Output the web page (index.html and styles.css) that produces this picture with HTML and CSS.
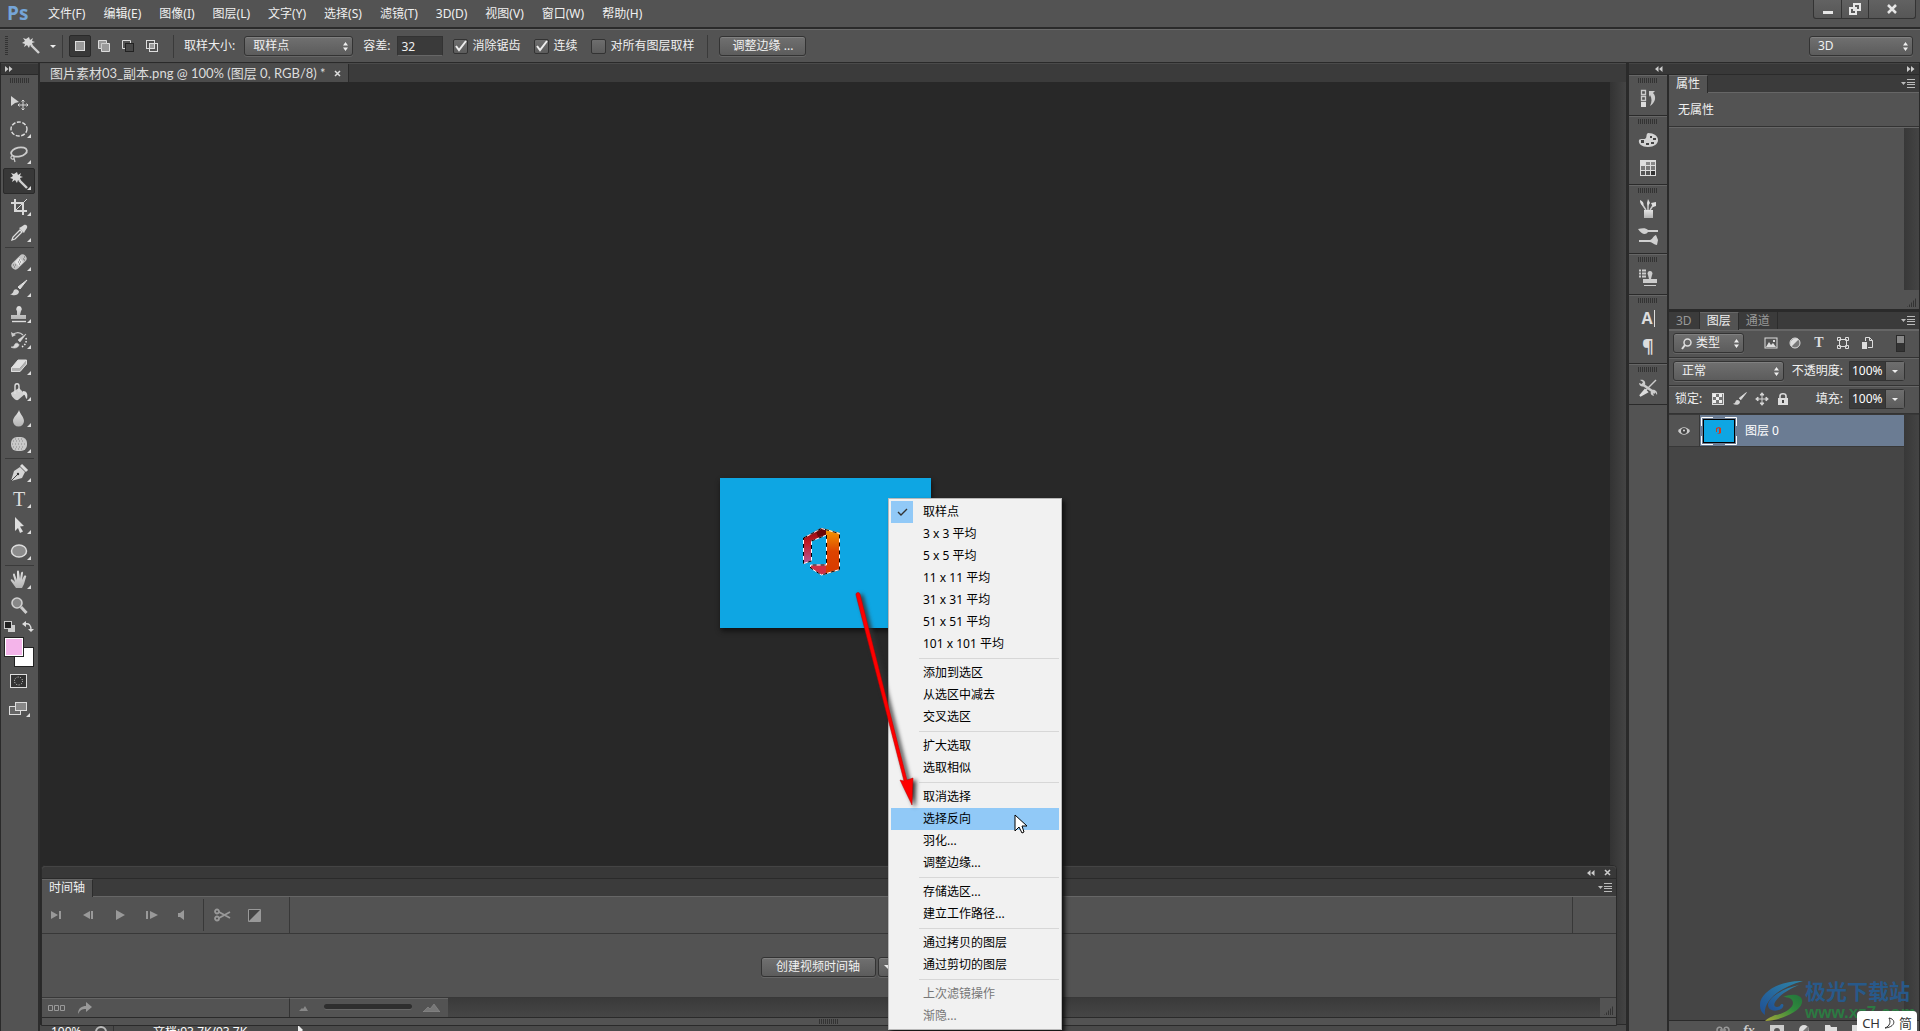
FILE: index.html
```html
<!DOCTYPE html>
<html lang="zh-CN">
<head>
<meta charset="utf-8">
<title>图片素材03_副本.png</title>
<link rel="stylesheet" href="styles.css">
</head>
<body>
<svg class="defs" aria-hidden="true">
  <defs>
    <linearGradient id="metal" x1="0" y1="0" x2="0" y2="1"><stop offset="0" stop-color="#e4e4e4"/><stop offset="1" stop-color="#b4b4b4"/></linearGradient>
    <symbol id="i-wand" viewBox="0 0 20 20"><path d="M8 1l1 3 3-2-1 3 3 1-3 1 1 3-3-1-1 3-2-3-3 2 1-3-3-1 3-2-2-3 3 1z" fill="#d8d8d8"/><path d="M10 9l8 8" stroke="#d0d0d0" stroke-width="2.4"/></symbol>
    <symbol id="i-brush" viewBox="0 0 20 20"><path d="M18 2l-7 9-2-2z" fill="#ddd" stroke="#ddd" stroke-width="1"/><path d="M1 16c3 0 3-2 4-4 2-2 5 0 5 2-1 4-6 4-9 2z" fill="#d4d4d4"/></symbol>
    <symbol id="i-stamp" viewBox="0 0 20 20"><path d="M10 2a3 3 0 0 1 2 5l-1 4h6v4H2v-4h6L8 7a3 3 0 0 1 2-5z" fill="url(#metal)"/><path d="M3 17.5h14" stroke="#ddd" stroke-width="1.4"/></symbol>
    <symbol id="i-menu" viewBox="0 0 14 9"><path d="M0 3h5L2.500 6z" fill="#bbb"/><path d="M6 .5h8M6 3.500h8M6 5.500h8M6 8.500h8" stroke="#bbb"/></symbol>
    <symbol id="i-left" viewBox="0 0 8 6"><path d="M3.500 0v6L0 3zM7.500 0v6L4 3z" fill="#ccc"/></symbol>
    <symbol id="i-right" viewBox="0 0 8 6"><path d="M0 0v6l3.500-3zM4 0v6l3.500-3z" fill="#ccc"/></symbol>
    <symbol id="i-down" viewBox="0 0 6 3"><path d="M0 0h6L3 3z" fill="#eee"/></symbol>
    <symbol id="i-move4" viewBox="0 0 14 14"><path d="M7 1v12M1 7h12M7 .7L5 3h4zM7 13.300L5 11h4zM.7 7L3 5v4zM13.300 7L11 5v4z" stroke="#d4d4d4" fill="#d4d4d4"/></symbol>
  </defs>
</svg>

<div class="app">
  <header class="menubar">
    <span class="logo">Ps</span>
    <nav class="menus">
      <a href="#">文件(F)</a><a href="#">编辑(E)</a><a href="#">图像(I)</a><a href="#">图层(L)</a><a href="#">文字(Y)</a><a href="#">选择(S)</a><a href="#">滤镜(T)</a><a href="#">3D(D)</a><a href="#">视图(V)</a><a href="#">窗口(W)</a><a href="#">帮助(H)</a>
    </nav>
    <div class="winbtns">
      <button aria-label="最小化"><svg width="12" height="12"><path d="M1 9.500h10" stroke="#e6e6e6" stroke-width="3"/></svg></button>
      <button aria-label="还原"><svg width="12" height="12"><path d="M5 1h6v6H5zM1 5h6v6H1z" fill="none" stroke="#e6e6e6" stroke-width="2"/></svg></button>
      <button class="close" aria-label="关闭"><svg width="12" height="12"><path d="M2 2l8 8M10 2l-8 8" stroke="#e6e6e6" stroke-width="2.500"/></svg></button>
    </div>
  </header>

  <div class="options">
    <i class="vgrip"></i>
    <button class="icon wandbtn" aria-label="魔棒工具"><svg width="20" height="20"><use href="#i-wand"/></svg><svg width="6" height="3"><use href="#i-down"/></svg></button>
    <i class="vsep"></i>
    <div class="modes">
      <button class="on" aria-label="新选区"><svg width="14" height="14"><rect x="2.500" y="2.500" width="9" height="9" fill="#999" stroke="#ddd"/></svg></button>
      <button aria-label="添加"><svg width="14" height="14"><path d="M1.500 1.500h8v3h3v8h-8v-3h-3z" fill="#999" stroke="#ddd"/><path d="M4.500 9.500v-5h5" fill="none" stroke="#ccc"/></svg></button>
      <button aria-label="减去"><svg width="14" height="14"><path d="M4.500 9.500h-3v-8h8v3" fill="none" stroke="#ddd"/><rect x="4.500" y="4.500" width="8" height="8" fill="#484848" stroke="#222"/></svg></button>
      <button aria-label="交叉"><svg width="14" height="14"><rect x="1.500" y="1.500" width="8" height="8" fill="none" stroke="#ddd"/><rect x="4.500" y="4.500" width="8" height="8" fill="none" stroke="#ddd"/><path d="M5 5h4v4H5z" fill="#999"/></svg></button>
    </div>
    <i class="vsep"></i>
    <label for="sample">取样大小:</label>
    <select id="sample" class="dd sample"><option>取样点</option></select>
    <label for="tol">容差:</label>
    <input id="tol" class="num" type="text" value="32">
    <label class="chk"><input type="checkbox" checked>消除锯齿</label>
    <label class="chk"><input type="checkbox" checked>连续</label>
    <label class="chk"><input type="checkbox">对所有图层取样</label>
    <i class="vsep"></i>
    <button class="btn refine">调整边缘 ...</button>
    <select class="dd workspace" aria-label="工作区"><option>3D</option></select>
  </div>

  <main class="work">
    <aside class="tools">
      <div class="strip"><svg width="8" height="6"><use href="#i-right"/></svg></div>
      <i class="hgrip"></i>
      <div class="toolset">
        <button class="solo" aria-label="移动"><svg width="20" height="20"><path d="M2 3l8 6-4 1-4 3z" fill="#d4d4d4"/><path d="M14 7v10M9 12h10M12.500 8.500L14 7l1.500 1.500M12.500 15.500L14 17l1.500-1.500M10.500 10.500L9 12l1.500 1.500M17.500 10.500L19 12l-1.500 1.500" stroke="#d4d4d4" fill="none"/></svg></button>
        <button aria-label="椭圆选框"><svg width="20" height="20"><ellipse cx="10" cy="10" rx="8" ry="7" fill="none" stroke="#ddd" stroke-width="1.400" stroke-dasharray="4 1.500"/></svg></button>
        <button aria-label="套索"><svg width="20" height="20"><ellipse cx="10" cy="7" rx="8" ry="4.500" transform="rotate(-12 10 7)" fill="none" stroke="#ccc" stroke-width="1.800"/><path d="M5 11c-3-1-4 2-2 3s3-2 1-3M5 13l1 4" fill="none" stroke="#ccc" stroke-width="1.200"/></svg></button>
        <button class="on" aria-label="魔棒"><svg width="20" height="20"><use href="#i-wand"/></svg></button>
        <button aria-label="裁剪"><svg width="20" height="20"><path d="M6 2v12h12M2 6h12v12" fill="none" stroke="#d8d8d8" stroke-width="2"/><path d="M7 13L18 2" stroke="#d8d8d8"/></svg></button>
        <button aria-label="吸管"><svg width="20" height="20"><path d="M3 17l1-3 7-7 2 2-7 7z" fill="#555" stroke="#ddd" stroke-width="1.300"/><path d="M10 5l5 5 1-2 2-3c1-2-1-4-3-3l-3 2z" fill="#d8d8d8"/></svg></button>
        <i class="hsep"></i>
        <button aria-label="修复画笔"><svg width="20" height="20"><rect x="1" y="6" width="18" height="8" rx="4" transform="rotate(-45 10 10)" fill="#c4c4c4"/><rect x="7" y="7" width="6" height="6" transform="rotate(-45 10 10)" fill="#e6e6e6"/><path d="M9 10h1M11 10h1M10 8h1M10 12h1M5 15h1M15 5h1M14 7h1M6 13h1M4 13h1M15 8h1" stroke="#666"/></svg></button>
        <button aria-label="画笔"><svg width="20" height="20"><use href="#i-brush"/></svg></button>
        <button aria-label="仿制图章"><svg width="20" height="20"><use href="#i-stamp"/></svg></button>
        <button aria-label="历史记录画笔"><svg width="20" height="20"><path d="M17 4l-6 8-2-2zM2 17c3 0 3-1 4-3 2-2 4 0 4 1-1 3-5 4-8 2z" fill="#d8d8d8" stroke="#d8d8d8" stroke-width=".6"/><path d="M3 5c4-3 8-3 11 0" fill="none" stroke="#ccc" stroke-width="1.300"/><path d="M2 2l1 5 4-2z" fill="#ccc"/><path d="M17 8c1 4-1 8-5 9" fill="none" stroke="#eee" stroke-width="1.500" stroke-dasharray="1.500 1.500"/></svg></button>
        <button aria-label="橡皮擦"><svg width="20" height="20"><path d="M9 4h9l-7 8H2z" fill="#e2e2e2"/><path d="M2 12h9v4H2zM11 12l7-8v4l-7 8z" fill="#b2b2b2"/><path d="M2.500 12v3.500h8.500l6.500-7.500V4H9z" fill="none" stroke="#ddd"/></svg></button>
        <button aria-label="油漆桶"><svg width="20" height="20"><path d="M2 11l8-5 6 6-7 6c-3 1-7-4-7-7z" fill="#d2d2d2"/><path d="M6 12V4c0-3 4-3 4 0v6" fill="none" stroke="#ddd" stroke-width="1.400"/><path d="M14 9c4 0 5 3 4 8-2-1-1-4-4-5z" fill="#ddd"/></svg></button>
        <button aria-label="模糊"><svg width="20" height="20"><path d="M10 2c1 4 5 7 5 11a5 5 0 0 1-11 0c0-4 5-7 6-11z" fill="url(#metal)"/></svg></button>
        <button aria-label="海绵"><svg width="20" height="20"><rect x="2" y="3" width="16" height="14" rx="6" fill="#c8c8c8"/><path d="M4 7h12M3 10h14M4 13h12M6 5h9M6 15h9" stroke="#888" stroke-dasharray="1 2"/></svg></button>
        <i class="hsep"></i>
        <button aria-label="钢笔"><svg width="20" height="20"><path d="M2 18l3-10 6-4 5 5-3 6z" fill="#d4d4d4"/><path d="M2 18l7-7" stroke="#444"/><circle cx="9" cy="11" r="1.200" fill="#333"/><path d="M12 2l6 6" stroke="#ddd" stroke-width="3"/></svg></button>
        <button class="type" aria-label="文字">T</button>
        <button aria-label="路径选择"><svg width="20" height="20"><path d="M6 2l9 9-4 .500 3 5-3 1.500-2-5-3 3z" fill="#ddd"/></svg></button>
        <button aria-label="椭圆"><svg width="20" height="20"><ellipse cx="10" cy="10" rx="7.500" ry="6" fill="#8c8c8c" stroke="#ddd" stroke-width="1.500"/></svg></button>
        <i class="hsep"></i>
        <button aria-label="抓手"><svg width="20" height="20"><path d="M7 18l-5-7c-1-2 1-2 2-1l2 2-2-7c0-2 2-2 2 0l2 5V2c0-2 2-2 2 0l1 7 1-6c1-2 2-1 2 0l-1 7 2-4c1-1 3 0 2 1l-2 7-2 4z" fill="url(#metal)"/></svg></button>
        <button class="solo" aria-label="缩放"><svg width="20" height="20"><circle cx="8" cy="7" r="5" fill="#888" stroke="#d0d0d0" stroke-width="1.600"/><path d="M12 11l5.500 6" stroke="#ccc" stroke-width="3"/></svg></button>
      </div>
      <svg class="mini" width="32" height="12"><rect x="4" y="4" width="7" height="7" fill="#ccc"/><rect x=".5" y=".5" width="7" height="7" fill="#222" stroke="#ccc"/><path d="M21 3c4-1 6 1 6 6" fill="none" stroke="#ddd" stroke-width="1.300"/><path d="M22 0v6l-4-3zM24 8h6l-3 3z" fill="#ddd"/></svg>
      <div class="swatches"><span class="bgc"></span><span class="fgc"></span></div>
      <div class="toolset modeset">
        <button class="solo" aria-label="快速蒙版"><svg width="20" height="20"><rect x="2.500" y="3.500" width="16" height="13" fill="#333" stroke="#ddd"/><circle cx="10.500" cy="10" r="4" fill="none" stroke="#ddd" stroke-dasharray="1 1.500"/></svg></button>
        <button aria-label="屏幕模式"><svg width="20" height="20"><rect x="1.500" y="8.500" width="11" height="8" fill="#666" stroke="#ddd"/><rect x="7.500" y="4.500" width="11" height="8" fill="#888" stroke="#ddd"/></svg></button>
      </div>
    </aside>

    <section class="doc">
      <div class="tabs doctabs"><div class="doctab">图片素材03_副本.png @ 100% (图层 0, RGB/8) * <button class="icon" aria-label="关闭文档"><svg width="7" height="7"><path d="M1 1l5 5M6 1L1 6" stroke="#ddd" stroke-width="1.500"/></svg></button></div></div>
      <div class="stage">
        <div class="canvas">
          <svg class="picture" width="211" height="150" viewBox="0 0 211 150">
            <defs>
              <linearGradient id="l1" x1="0" y1="0" x2="0" y2="1"><stop offset="0" stop-color="#8a0808"/><stop offset=".4" stop-color="#c01a24"/><stop offset="1" stop-color="#b85a9c"/></linearGradient>
              <linearGradient id="l2" x1="0" y1="0" x2="0" y2="1"><stop offset="0" stop-color="#f59a00"/><stop offset=".5" stop-color="#dd4400"/><stop offset="1" stop-color="#d83a00"/></linearGradient>
            </defs>
            <rect width="211" height="150" fill="#0ea6e3"/>
            <path d="M83 60l18-10 6 2v5l-16 6v20l-7 3z" fill="url(#l1)"/>
            <path d="M96 53l5-3 5 1v6l-8 2z" fill="#6b0606"/>
            <path d="M90 87l17-1v10l-5 1-12-7z" fill="#cf2f45"/>
            <path d="M106 51l14 4v37l-14 4z" fill="url(#l2)"/>
            <g fill="none" stroke="#fff"><path d="M83.500 60l18-9.500 18 5v36l-18 5.500-11-7v-3h16V57l-15 6v20l-8 2.500z"/><path d="M83.500 60l18-9.500 18 5v36l-18 5.500-11-7v-3h16V57l-15 6v20l-8 2.500z" stroke="#000" stroke-dasharray="4 4"/></g>
          </svg>
        </div>
        <div class="vscroll"></div>
      </div>
      <div class="status"><span class="zoomv">100%</span><svg width="14" height="14"><circle cx="7" cy="7" r="5" fill="none" stroke="#bbb" stroke-width="2"/></svg><span class="docsize">文档:93.7K/93.7K</span><svg width="8" height="10"><path d="M1 0v10l5-5z" fill="#eee"/></svg></div>

      <section class="timeline">
        <div class="strip tstrip"><svg width="8" height="6"><use href="#i-left"/></svg><svg width="7" height="7"><path d="M1 1l5 5M6 1L1 6" stroke="#ccc" stroke-width="1.600"/></svg></div>
        <div class="tabs"><div class="tab on">时间轴</div><svg class="pmenu" width="14" height="9"><use href="#i-menu"/></svg></div>
        <div class="tctl">
          <div class="play">
            <button aria-label="首帧"><svg width="12" height="10"><path d="M1 1v8l7-4zM9 1h2v8H9z"/></svg></button>
            <button aria-label="上一帧"><svg width="12" height="10"><path d="M8 1v8L1 5zM9 1h2v8H9z"/></svg></button>
            <button aria-label="播放"><svg width="12" height="10"><path d="M2 0v10l9-5z"/></svg></button>
            <button aria-label="下一帧"><svg width="12" height="10"><path d="M0 1h2v8H0zM4 1v8l8-4z"/></svg></button>
            <button aria-label="静音"><svg width="12" height="10"><path d="M0 3h2l4-3v10L2 7H0z"/></svg></button>
          </div>
          <div class="cut">
            <button aria-label="拆分"><svg width="17" height="14"><g fill="none" stroke="#999" stroke-width="1.800"><circle cx="3" cy="3.500" r="2"/><circle cx="3" cy="10.500" r="2"/><path d="M5 4l11 6M5 10l11-6"/></g></svg></button>
            <button aria-label="过渡"><svg width="13" height="13"><path d="M.500 .500h12v12H.500z" fill="#444" stroke="#999"/><path d="M1 12L12 1v11z"/></svg></button>
          </div>
          <div class="ruler"></div>
        </div>
        <div class="tbody"><button class="btn">创建视频时间轴</button><button class="btn drop" aria-label="更多"><svg width="10" height="5" viewBox="0 0 6 3"><use href="#i-down"/></svg></button></div>
        <div class="tfoot">
          <div class="tf1"><svg width="18" height="8"><path d="M.5 1.500h4v5h-4zM6.500 1.500h4v5h-4zM12.500 1.500h4v5h-4z" fill="none" stroke="#999"/></svg><svg width="14" height="12"><path d="M0 12c0-6 4-8 8-8V0l6 5-6 5V7C4 7 2 8 0 12z" fill="#999"/></svg></div>
          <div class="tf2"><svg width="9" height="5"><path d="M0 5l3-3 1 1 2-3 3 5z" fill="#888"/></svg><i class="track"></i><svg width="17" height="8"><path d="M0 8l5-5 2 2 4-5 6 8z" fill="#777" stroke="#999" stroke-width=".5"/></svg></div>
          <div class="tf3"></div>
          <i class="corner"></i>
        </div>
        <div class="tend"><i class="hgrip"></i></div>
      </section>
    </section>

    <aside class="right">
      <div class="strip rstrip"><svg width="8" height="6"><use href="#i-left"/></svg><svg width="8" height="6"><use href="#i-right"/></svg></div>
      <div class="cols">
        <div class="dock">
          <div class="dgroup"><i class="hgrip"></i>
            <button aria-label="历史记录"><svg width="20" height="20"><path d="M3.500 1.500h4v4h-4zM3.500 7.500h4v4h-4z" fill="none" stroke="#ccc" stroke-width="1.300"/><path d="M3 13h5v5H3z" fill="#ddd"/><path d="M11 2h6l-2 2c4 4 2 10-3 13 2-4 2-8 0-11l-1 2z" fill="#ccc"/></svg></button></div>
          <div class="dgroup"><i class="hgrip"></i>
            <button aria-label="颜色"><svg width="20" height="20"><path d="M10 3c6 0 10 3 10 7s-4 7-10 7S0 14 1 10c1-2 6 0 7-2s0-4 2-5z" fill="#d4d4d4"/><path d="M3 10h3v3H3zM8 13h3v2H8zM13 12h3v2h-3zM15 8h3v2h-3zM12 6h2v2h-2z" fill="#444"/></svg></button>
            <button aria-label="色板"><svg width="20" height="20"><path d="M2 2h16v16H2z" fill="#ddd"/><path d="M8 4h4v3H8zM13 4h4v3h-4z" fill="#888"/><path d="M3 8h4v4H3zM8 8h4v4H8zM13 8h4v4h-4z" fill="#777"/><path d="M3 13h4v4H3zM8 13h4v4H8z" fill="#555"/><path d="M13 13h4v4h-4z" fill="#333"/></svg></button></div>
          <div class="dgroup"><i class="hgrip"></i>
            <button aria-label="画笔"><svg width="20" height="20"><path d="M6 11h9v8H6z" fill="url(#metal)"/><path d="M8 11L4 5M10 11V4M12 11l4-6" stroke="#ccc" stroke-width="1.500"/><path d="M2 1c4 2 4 4 3 6C2 5 2 3 2 1zM10 0l2 4-2 3-1-3zM13 4l5-1v4l-3 1z" fill="#ddd"/></svg></button>
            <button aria-label="画笔预设"><svg width="20" height="20"><path d="M0 2c5-1 8-1 10 1h10v2H10c-2 3-6 3-10-3zM1 13h11c2 0 3-4 6-5l2 5-1 5c-3 0-5-3-7-3H1z" fill="#d0d0d0"/></svg></button></div>
          <div class="dgroup"><i class="hgrip"></i>
            <button aria-label="仿制源"><svg width="20" height="20"><path d="M1 2.500h2M4 2.500h4M1 5.500h2M4 5.500h4M1 8.500h2M4 8.500h4" stroke="#ccc" stroke-width="2"/><path d="M12 3a2.500 2.500 0 0 1 2 4l-1 4h6v4H5v-4h6l-1-4a2.500 2.500 0 0 1 2-4zM6 17h12v1H6z" fill="#ccc"/></svg></button></div>
          <div class="dgroup"><i class="hgrip"></i>
            <button class="char" aria-label="字符">A<i class="caret"></i></button>
            <button class="char para" aria-label="段落">¶</button></div>
          <div class="dgroup"><i class="hgrip"></i>
            <button aria-label="工具预设"><svg width="20" height="20"><path d="M5 15L18 2" stroke="#ccc" stroke-width="1.500"/><path d="M2 18l5-6 2 2z" fill="#ddd" stroke="#ddd" stroke-width="2"/><path d="M4 6l13 9" stroke="#ccc" stroke-width="2.500"/><path d="M1 5l3 1 1-2-3-2c4-1 6 2 5 5-2 3-6 1-6-2zM19 17l-2-3-2 1 1 3c-4-1-4-4-2-6 3-1 6 2 5 5z" fill="#ccc"/></svg></button></div>
        </div>

        <div class="panels">
          <section class="props">
            <div class="tabs"><div class="tab on">属性</div><svg class="pmenu" width="14" height="9"><use href="#i-menu"/></svg></div>
            <p class="noprops">无属性</p>
            <div class="propbody"><i class="pscroll"></i></div>
            <div class="propfoot"><i class="corner"></i></div>
          </section>
          <section class="layers">
            <div class="tabs"><div class="tab">3D</div><div class="tab on">图层</div><div class="tab">通道</div><svg class="pmenu" width="14" height="9"><use href="#i-menu"/></svg></div>
            <div class="lrow">
              <span class="kindwrap"><svg width="11" height="12"><circle cx="6.500" cy="4.500" r="3.500" fill="none" stroke="#ddd" stroke-width="1.500"/><path d="M4 7l-3 4" stroke="#ddd" stroke-width="2"/></svg><select class="dd kind" aria-label="筛选类型"><option>类型</option></select></span>
              <div class="filters">
                <svg width="14" height="14"><rect x="1" y="2" width="12" height="10" fill="none" stroke="#ddd"/><path d="M2 11l3-5 2 3 2-2 3 4zM9 4h2v2H9z" fill="#ddd"/></svg>
                <svg width="14" height="14"><circle cx="7" cy="7" r="5" fill="#777" stroke="#ddd"/><path d="M3.500 10.500l7-7A5 5 0 0 0 3.500 10.500z" fill="#ddd"/></svg>
                <span class="ft">T</span>
                <svg width="14" height="14"><path d="M3.500 3.500h7v7h-7zM1.500 1.500h3v3h-3zM9.500 1.500h3v3h-3zM1.500 9.500h3v3h-3zM9.500 9.500h3v3h-3z" fill="#535353" stroke="#ddd"/></svg>
                <svg width="14" height="14"><path d="M5.500 5V1.500h4l3 3v7H8M9.500 1.500v3h3" fill="none" stroke="#ddd"/><path d="M2 6h5v7H2z" fill="#ddd"/></svg>
              </div>
              <i class="switch"></i>
            </div>
            <div class="lrow">
              <select class="dd blend" aria-label="混合模式"><option>正常</option></select>
              <label class="pct">不透明度: <span><input type="text" value="100%"><button aria-label="不透明度滑块"><svg width="6" height="3"><use href="#i-down"/></svg></button></span></label>
            </div>
            <div class="lrow">
              <span class="locklbl">锁定:</span>
              <div class="locks">
                <svg width="14" height="14"><rect x="1.500" y="1.500" width="11" height="11" fill="#777" stroke="#ddd"/><path d="M2 2h3v3H2zM8 2h3v3H8zM5 5h3v3H5zM2 8h3v3H2zM8 8h3v3H8z" fill="#eee"/></svg>
                <svg width="16" height="16"><use href="#i-brush"/></svg>
                <svg width="14" height="14"><use href="#i-move4"/></svg>
                <svg width="14" height="14"><path d="M2 6h10v7H2z" fill="#ddd"/><path d="M4 6V4c0-3 6-3 6 0v2" fill="none" stroke="#ddd" stroke-width="1.600"/><path d="M7 8v3" stroke="#444" stroke-width="2"/></svg>
              </div>
              <label class="pct">填充: <span><input type="text" value="100%"><button aria-label="填充滑块"><svg width="6" height="3"><use href="#i-down"/></svg></button></span></label>
            </div>
            <div class="llist">
              <div class="items">
                <div class="layer">
                  <div class="eye"><svg width="12" height="10"><path d="M0 5c3-5 9-5 12 0-3 5-9 5-12 0z" fill="#ccc"/><circle cx="6" cy="5" r="3" fill="#444"/><circle cx="6" cy="4.500" r="1" fill="#ddd"/></svg></div>
                  <div class="lname"><svg width="36" height="28"><path d="M.5 9V.500H12M24 .500h11.500V9M35.500 19v8.500H24M12 27.500H.500V19" fill="none" stroke="#fff"/><rect x="2.500" y="2.500" width="31" height="23" fill="#0ea6e3" stroke="#000"/><path d="M15 11l3-1v1l-2 1v3h-1zM16 16h2v1zM18 10l2 1v5l-2 1z" fill="#d03a20"/></svg>图层 0</div>
                </div>
              </div>
              <i class="pscroll"></i>
            </div>
            <div class="lfoot">
              <svg width="14" height="12"><path d="M6 5c-1-3-5-2-5 1s4 4 5 1M8 5c1-3 5-2 5 1s-4 4-5 1M4 6h6" fill="none" stroke="#999" stroke-width="1.500"/></svg>
              <span class="fx">fx</span>
              <svg width="14" height="12"><path d="M0 1h14v11H0z" fill="#ccc"/><circle cx="7" cy="7" r="3" fill="#555"/></svg>
              <svg width="14" height="12"><circle cx="7" cy="6" r="5" fill="#ddd"/><path d="M3 10l8-8c2 4 0 9-5 9z" fill="#777"/></svg>
              <svg width="14" height="12"><path d="M1 1h5l1 2h6v9H1z" fill="#ddd"/></svg>
              <svg width="14" height="12"><path d="M1 1h12v11H1z" fill="#ddd"/></svg>
            </div>
          </section>
        </div>
      </div>
    </aside>
  </main>
</div>

<div class="brand">
  <svg width="46" height="42" viewBox="0 0 46 42">
    <defs><linearGradient id="b1" x1="0" y1="1" x2="1" y2="0"><stop offset="0" stop-color="#1f4f94"/><stop offset="1" stop-color="#2f86a8"/></linearGradient><linearGradient id="b2" x1="0" y1="1" x2="1" y2="0"><stop offset="0" stop-color="#a8a838"/><stop offset=".6" stop-color="#2f8a3c"/><stop offset="1" stop-color="#23733c"/></linearGradient></defs>
    <path d="M44 1C22 0 0 12 1 26c0 4 2 7 5 9C4 22 18 8 44 1z" fill="url(#b1)"/>
    <path d="M40 5C24 8 9 18 9 25c0 6 8 7 13 4 3-2 3-5 1-5-2 0-1 3-5 3-8-1 2-14 22-22z" fill="url(#b1)"/>
    <path d="M24 17c10-4 18-2 19 3 2 9-17 20-37 21 4-4 7-4 10-6 9-1 18-7 18-12 0-4-4-6-10-6z" fill="url(#b2)"/>
  </svg>
  <div class="btext"><span class="bname">极光下载站</span><span class="burl">www.xz7.com</span></div>
</div>
<div class="ime">CH <svg width="11" height="12"><path d="M5 1c7 1 7 9-4 10 5-2 6-6 4-10z" fill="none" stroke="#333"/></svg> 简</div>

<ul class="ctx">
  <li class="checked"><svg width="22" height="22"><path d="M7 11l3 3 6-6" fill="none" stroke="#333" stroke-width="1.400"/></svg>取样点</li>
  <li>3 x 3 平均</li><li>5 x 5 平均</li><li>11 x 11 平均</li><li>31 x 31 平均</li><li>51 x 51 平均</li><li>101 x 101 平均</li>
  <li class="line"></li>
  <li>添加到选区</li><li>从选区中减去</li><li>交叉选区</li>
  <li class="line"></li>
  <li>扩大选取</li><li>选取相似</li>
  <li class="line"></li>
  <li>取消选择</li><li class="hover">选择反向</li><li>羽化...</li><li>调整边缘...</li>
  <li class="line"></li>
  <li>存储选区...</li><li>建立工作路径...</li>
  <li class="line"></li>
  <li>通过拷贝的图层</li><li>通过剪切的图层</li>
  <li class="line"></li>
  <li class="off">上次滤镜操作</li><li class="off">渐隐...</li>
</ul>
<svg class="arrow" width="76" height="224"><path d="M6 5l48 186-4-1 12 25 1-27-6 2L10 4a2 2 0 0 0-4 1z" fill="#fe0000" stroke="#b00" stroke-width=".5"/></svg>
<svg class="cursor" width="14" height="20"><path d="M1 1v16l4-4 3 6 2-1-2-6h5z" fill="#fff" stroke="#000"/></svg>
</body>
</html>
```
FILE: styles.css
```css
* { box-sizing: border-box; }
body {
  margin: 0;
  height: 100vh;
  overflow: hidden;
  position: relative;
  background: #282828;
  color: #f0f0f0;
  font: 12px/16px "Noto Sans", "Noto Sans CJK SC", sans-serif;
}
button, input, select { font: inherit; color: inherit; margin: 0; padding: 0; border: 0; background: none; border-radius: 0; }
svg { display: block; flex: none; }
i { display: block; flex: none; }
.defs { position: absolute; width: 0; height: 0; }

/* the lower status rows run past the window edge */
.app { display: flex; flex-direction: column; height: calc(100vh + 14px); }

/* menu bar */
.menubar { display: flex; flex: none; height: 29px; background: #535353; border-bottom: 2px solid #2a2a2a; padding: 0 4px 0 7px; }
.logo { width: 41px; color: #75a5d8; font: bold 19px/27px "Open Sans", sans-serif; }
.menus { display: flex; gap: 18px; line-height: 27px; }
.menus a { color: #f0f0f0; text-decoration: none; }
.winbtns { display: flex; margin-left: auto; height: 19px; border: 1px solid #333; border-top: 0; border-radius: 0 0 3px 3px; background: linear-gradient(#626262, #565656); }
.winbtns button { width: 27px; display: flex; justify-content: center; padding-top: 3px; }
.winbtns button + button { border-left: 1px solid #333; }
.winbtns .close { width: 47px; }

/* options bar */
.options { display: flex; flex: none; align-items: center; height: 34px; padding: 0 7px 0 5px; background: #535353; border-top: 1px solid #6a6a6a; border-bottom: 1px solid #2a2a2a; }
.vgrip { width: 3px; height: 20px; background: repeating-linear-gradient(#333 0 1px, #535353 1px 2px); margin-right: 13px; }
.icon { display: flex; align-items: center; }
.wandbtn { gap: 9px; margin-right: 6px; }
.vsep { width: 1px; height: 23px; background: #3a3a3a; }
.modes { display: flex; gap: 2px; margin: 0 10px 0 6px; }
.modes button { width: 22px; height: 22px; display: flex; align-items: center; justify-content: center; border-radius: 2px; }
.modes .on { background: #383838; border: 1px solid #2a2a2a; }
.options > label { margin-left: 10px; }
.btn, .dd { height: 20px; border: 1px solid #333; border-radius: 3px; background: linear-gradient(#707070, #5c5c5c); box-shadow: 0 1px #666, inset 0 1px #808080; text-align: center; }
.dd {
  appearance: none;
  padding: 0 18px 0 8px;
  text-align: left;
  background: url("data:image/svg+xml,%3Csvg xmlns='http://www.w3.org/2000/svg' width='5' height='9'%3E%3Cpath d='M0 3.500h5L2.500 0zM0 5.500h5L2.500 9z' fill='%23eee'/%3E%3C/svg%3E") no-repeat right 4px center, linear-gradient(#707070, #5c5c5c);
}
.sample { width: 109px; margin-left: 9px; }
.num { width: 46px; height: 20px; margin-left: 7px; padding-left: 3px; background: #3a3a3a; border: 1px solid #333; border-bottom-color: #666; }
.options > .chk { display: flex; align-items: center; gap: 4px; margin-left: 10px; }
.options > .chk + .chk { margin-left: 14px; }
.chk input { appearance: none; width: 15px; height: 15px; border: 1px solid #333; border-radius: 2px; background: linear-gradient(#6e6e6e, #5c5c5c); }
.chk input:checked { background: url("data:image/svg+xml,%3Csvg xmlns='http://www.w3.org/2000/svg' width='13' height='13'%3E%3Cpath d='M2 6l3 4 7-9' fill='none' stroke='%23eee' stroke-width='2'/%3E%3C/svg%3E") center no-repeat, linear-gradient(#6e6e6e, #5c5c5c); }
.chk + .vsep { margin: 0 11px 0 13px; }
.refine { width: 87px; }
.workspace { width: 104px; margin-left: auto; }

/* shared panel parts */
.work { display: flex; flex: 1; min-height: 0; }
.strip { display: flex; flex: none; align-items: center; height: 12px; background: #383838; border-bottom: 1px solid #2a2a2a; border-top: 1px solid #444; }
.hgrip { width: 20px; height: 5px; background: repeating-linear-gradient(90deg, #333 0 1px, #535353 1px 2px); }
.tabs { display: flex; flex: none; align-items: stretch; height: 18px; background: #3b3b3b; border-bottom: 1px solid #666; }
.tab { padding: 0 7px; line-height: 17px; color: #999; border-right: 1px solid #2c2c2c; }
.tab.on { color: #f0f0f0; background: #535353; margin-bottom: -1px; border-top: 1px solid #666; line-height: 16px; }
.pmenu { margin: 4px 4px 0 auto; }
.corner { width: 10px; height: 10px; background: repeating-linear-gradient(90deg, #333 0 1px, transparent 1px 2px); clip-path: polygon(100% 0, 100% 100%, 0 100%); }

/* tool box */
.tools { flex: none; display: flex; flex-direction: column; align-items: flex-start; width: 40px; background: #535353; border-left: 1px solid #2a2a2a; border-right: 2px solid #2c2c2c; }
.tools .strip { width: 100%; padding-left: 4px; }
.tools > .hgrip { margin: 3px 0 7px 9px; }
.toolset { display: flex; flex-direction: column; align-items: center; margin-left: 2px; }
.toolset button { position: relative; width: 32px; height: 26px; display: flex; align-items: center; justify-content: center; border: 1px solid transparent; border-radius: 2px; }
.toolset button.on { background: #383838; border-color: #2a2a2a; }
.toolset button:not(.solo)::after { content: ""; position: absolute; right: 3px; bottom: 3px; border: 2px solid; border-color: transparent #ddd #ddd transparent; }
.toolset .type { font: 20px/24px "Liberation Serif", serif; color: #ddd; }
.hsep { width: 29px; height: 3px; border-bottom: 1px solid #535353; border-top: 1px solid #535353; background: #3a3a3a; }
.mini { margin: 2px 0 4px 3px; }
.swatches { display: grid; grid-template: repeat(3, 10px) / repeat(3, 10px); margin-left: 3px; }
.swatches span { border: 1px solid #222; box-shadow: inset 0 0 0 1px #fff; }
.fgc { grid-area: 1 / 1 / 3 / 3; background: #f4b4ea; }
.bgc { grid-area: 2 / 2 / 4 / 4; background: #fff; }
.modeset { gap: 1px; padding-top: 1px; margin-left: 1px; }

/* document */
.doc { position: relative; flex: 1; min-width: 0; display: flex; flex-direction: column; }
.doctabs { height: 19px; border-bottom: 0; border-top: 1px solid #4a4a4a; }
.doctab { display: flex; align-items: center; gap: 8px; padding: 0 7px 0 10px; font: 13px/17px "Lato", "Noto Sans CJK SC", sans-serif; background: #4c4c4c; color: #ddd; border-right: 1px solid #2a2a2a; }
.stage { flex: 1; display: flex; min-height: 0; }
.canvas { flex: 1; display: flex; align-items: center; justify-content: center; background: #282828; }
.picture { box-shadow: 1px 3px 5px #111; }
.vscroll { width: 16px; background: linear-gradient(90deg, #333, #444); }
.status { flex: none; display: flex; align-items: flex-start; height: 21px; background: #4a4a4a; line-height: 14px; border-top: 1px solid #2a2a2a; color: #fff; }
.zoomv { width: 54px; padding-left: 11px; }
.docsize { width: 184px; margin-left: 5px; padding-left: 39px; border-left: 1px solid #333; }

/* timeline floats over the document */
.timeline { position: absolute; left: 1px; right: 9px; bottom: 19px; height: 161px; display: flex; flex-direction: column; background: #535353; border: 1px solid #2a2a2a; border-radius: 4px 4px 0 0; }
.tstrip { height: 13px; gap: 9px; justify-content: flex-end; padding-right: 5px; border-radius: 4px 4px 0 0; }
.tctl { display: flex; flex: none; height: 37px; border-bottom: 1px solid #383838; }
.tctl button svg { fill: #999; }
.play { display: flex; gap: 20px; padding: 0 13px 0 8px; margin: 2px 0; width: 162px; border-right: 1px solid #383838; }
.play button, .cut button { flex: none; display: flex; align-items: center; }
.cut { display: flex; gap: 17px; padding-left: 10px; width: 86px; border-right: 1px solid #383838; }
.ruler { flex: 1; margin-right: 43px; border-right: 1px solid #383838; }
.tbody { flex: 1; display: flex; justify-content: center; align-items: flex-start; gap: 2px; padding: 23px 0 0 3px; }
.tbody .btn { width: 115px; }
.tbody .drop { width: 23px; display: flex; align-items: center; justify-content: center; }
.tfoot { display: flex; flex: none; height: 20px; border-top: 1px solid #383838; }
.tf1 { display: flex; align-items: center; gap: 12px; width: 248px; padding-left: 6px; border-right: 1px solid #333; border-top: 1px solid #666; }
.tf2 { display: flex; align-items: center; gap: 11px; width: 158px; padding-left: 9px; border-top: 1px solid #666; }
.track { width: 88px; height: 5px; margin: 0 0 3px 5px; border-radius: 3px; background: #2e2e2e; box-shadow: 0 1px #666; }
.tf3 { flex: 1; background: linear-gradient(#3a3a3a, #464646); }
.tfoot .corner { margin: 7px 2px 0 4px; }
.tend { display: flex; flex: none; justify-content: center; align-items: center; height: 8px; border-top: 1px solid #2a2a2a; }

/* right side */
.right { flex: none; display: flex; flex-direction: column; width: 294px; border-left: 3px solid #2a2a2a; border-right: 1px solid #2a2a2a; }
.rstrip { justify-content: space-between; padding: 0 4px 0 26px; }
.cols { display: flex; flex: 1; min-height: 0; }
.dock { flex: none; width: 40px; background: #535353; border-right: 2px solid #2a2a2a; }
.dgroup { display: flex; flex-direction: column; align-items: center; padding: 2px 0 3px; border-top: 1px solid #666; border-bottom: 1px solid #2a2a2a; }
.dgroup .hgrip { margin-bottom: 1px; }
.dgroup button { height: 28px; display: flex; align-items: center; }
.dgroup button svg { margin-top: 1px; }
.dgroup .char { gap: 1px; font: bold 16px/28px "Open Sans", sans-serif; color: #ddd; }
.caret { width: 1px; height: 17px; background: #ddd; }
.dgroup .para { font-size: 18px; }
.panels { flex: 1; min-width: 0; display: flex; flex-direction: column; background: #535353; }
.props { flex: none; border-bottom: 3px solid #2a2a2a; }
.noprops { margin: 0; padding: 9px 9px 8px; border-bottom: 1px solid #333; }
.propbody { display: flex; justify-content: flex-end; height: 163px; border-top: 1px solid #666; }
.pscroll { width: 15px; background: linear-gradient(90deg, #383838, #444); }
.propfoot { display: flex; justify-content: flex-end; align-items: flex-end; height: 19px; padding: 2px; }
.layers { flex: 1; min-height: 0; display: flex; flex-direction: column; }
.lrow { display: flex; flex: none; align-items: center; height: 28px; padding: 0 14px 2px 4px; border-bottom: 1px solid #333; border-top: 1px solid #666; }
.kindwrap { display: grid; }
.kindwrap > * { grid-area: 1 / 1; }
.kindwrap svg { z-index: 1; margin: 5px 0 0 8px; }
.kind { width: 71px; padding-left: 22px; }
.filters { display: flex; align-items: center; gap: 10px; margin-left: 20px; }
.ft { width: 14px; text-align: center; font: bold 14px/14px "Liberation Serif", serif; color: #ddd; }
.switch { width: 9px; height: 17px; margin-left: auto; border: 1px solid #2a2a2a; background: linear-gradient(#888 0 45%, #333 45%); }
.blend { width: 111px; }
.pct { display: flex; align-items: center; gap: 6px; margin-left: auto; }
.pct span { display: flex; height: 20px; border: 1px solid #333; border-radius: 0 3px 3px 0; }
.pct input { width: 35px; padding-left: 2px; background: #3a3a3a; color: #fff; }
.pct button { display: flex; align-items: center; justify-content: center; width: 19px; border-left: 1px solid #333; background: linear-gradient(#6e6e6e, #5c5c5c); }
.locklbl { margin-left: 2px; }
.locks { display: flex; align-items: center; gap: 7px; margin-left: 9px; }
.llist { flex: 1; display: flex; min-height: 0; background: #454545; border-top: 1px solid #383838; }
.items { flex: 1; }
.layer { display: flex; height: 32px; border-bottom: 1px solid #383838; }
.eye { width: 31px; display: flex; align-items: center; justify-content: center; background: #535353; border-right: 1px solid #383838; }
.lname { flex: 1; display: flex; align-items: center; gap: 8px; padding-left: 1px; background: #6b7c93; color: #fff; }
.lfoot { flex: none; display: flex; gap: 13px; height: 25px; padding: 3px 0 0 47px; border-top: 1px solid #2a2a2a; }
.fx { width: 14px; font: italic bold 14px/14px "Liberation Serif", serif; color: #ccc; }

/* overlays */
.brand { position: absolute; right: 9px; bottom: 7px; display: flex; align-items: flex-start; }
.btext { display: flex; flex-direction: column; width: 106px; }
.bname { font-size: 21px; line-height: 22px; font-weight: bold; color: #28598a; white-space: nowrap; }
.burl { font: bold 17px/22px "Liberation Sans", sans-serif; color: #2c7a42; white-space: nowrap; }
.ime { position: absolute; right: 3px; bottom: 0; display: flex; align-items: center; gap: 4px; height: 20px; padding: 4px 5px 0; background: #fff; color: #333; border-radius: 4px 4px 0 0; font-size: 13px; }
.ctx { position: absolute; left: 888px; top: 498px; width: 174px; margin: 0; padding: 2px; list-style: none; background: #f1f1f1; border: 1px solid #b8b8b8; color: #000; box-shadow: 3px 3px 4px #111; }
.ctx li { height: 22px; padding-left: 32px; line-height: 22px; }
.ctx .checked { display: flex; padding-left: 0; gap: 10px; }
.ctx .checked svg { background: #91c9f7; }
.ctx .hover { background: #91c9f7; }
.ctx .off { color: #777; }
.ctx .line { height: 7px; margin-left: 28px; padding: 0; border-bottom: 3px solid #f1f1f1; background: linear-gradient(#f1f1f1 3px, #d7d7d7 3px); }
.arrow { position: absolute; left: 850px; top: 590px; filter: drop-shadow(3px 2px 2px #333); }
.cursor { position: absolute; left: 1014px; top: 814px; }
```
